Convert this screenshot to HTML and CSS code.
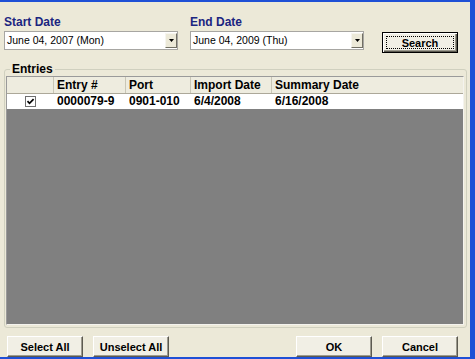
FILE: index.html
```html
<!DOCTYPE html>
<html>
<head>
<meta charset="utf-8">
<link rel="stylesheet" href="styles.css">
</head>
<body>
<div class="win">
  <div class="top">
    <div class="field">
      <div class="lbl">Start Date</div>
      <div class="combo">
        <span class="val">June 04, 2007 (Mon)</span>
        <span class="drop"><svg width="5" height="3" viewBox="0 0 5 3"><polygon points="0,0 5,0 2.5,3" fill="#000"/></svg></span>
      </div>
    </div>
    <div class="field">
      <div class="lbl">End Date</div>
      <div class="combo">
        <span class="val">June 04, 2009 (Thu)</span>
        <span class="drop"><svg width="5" height="3" viewBox="0 0 5 3"><polygon points="0,0 5,0 2.5,3" fill="#000"/></svg></span>
      </div>
    </div>
    <button class="btn default search"><span class="focus">Search</span></button>
  </div>
  <div class="group">
    <div class="legend">Entries</div>
    <div class="grid">
      <div class="row hdr">
        <div class="c c1"></div>
        <div class="c c2">Entry #</div>
        <div class="c c3">Port</div>
        <div class="c c4">Import Date</div>
        <div class="c c5">Summary Date</div>
      </div>
      <div class="row data">
        <div class="c c1"><span class="chk"><svg width="9" height="9" viewBox="0 0 9 9"><polyline points="1.5,4.2 3.5,6.3 7.6,2.2" fill="none" stroke="#000" stroke-width="1.7"/></svg></span></div>
        <div class="c c2">0000079-9</div>
        <div class="c c3">0901-010</div>
        <div class="c c4">6/4/2008</div>
        <div class="c c5">6/16/2008</div>
      </div>
    </div>
  </div>
  <div class="bottom">
    <button class="btn">Select All</button>
    <button class="btn">Unselect All</button>
    <button class="btn push">OK</button>
    <button class="btn">Cancel</button>
  </div>
</div>
</body>
</html>
```
FILE: styles.css
```css
html, body {
  margin: 0;
  padding: 0;
}
body {
  width: 475px;
  height: 359px;
  overflow: hidden;
  background: #1f50d6;
  font-family: "Liberation Sans", Arial, sans-serif;
  color: #000;
}
.win {
  margin-top: 2px;
  width: 470px;
  height: 355px;
  background: #ece9d8;
  display: flex;
  flex-direction: column;
}
.top {
  display: flex;
  align-items: flex-start;
  padding: 13px 0 0 4px;
}
.field {
  width: 174px;
  display: flex;
  flex-direction: column;
}
.field + .field {
  margin-left: 12px;
}
.lbl {
  font-weight: bold;
  font-size: 12px;
  line-height: 14px;
  height: 14px;
  margin-bottom: 2px;
  color: #1b2580;
}
.combo {
  box-sizing: border-box;
  height: 19px;
  border: 1px solid #a7a6a2;
  background: #fff;
  display: flex;
}
.val {
  flex: 1;
  font-size: 10.5px;
  line-height: 17px;
  padding-left: 2px;
  white-space: nowrap;
}
.drop {
  box-sizing: border-box;
  width: 12px;
  margin: 1px 0;
  background: #ece9d8;
  border: 1px solid;
  border-color: #f6f5ef #716f64 #716f64 #f6f5ef;
  display: flex;
  align-items: center;
  justify-content: center;
}
.btn {
  box-sizing: border-box;
  width: 76px;
  height: 21px;
  padding: 0;
  margin: 0;
  font-family: "Liberation Sans", Arial, sans-serif;
  font-weight: bold;
  font-size: 11px;
  color: #000;
  background: #f1efe5;
  border: 1px solid;
  border-color: #ffffff #5c5a50 #5c5a50 #ffffff;
  box-shadow: inset -1px -1px 0 #9c9a8e;
}
.btn.default {
  border: 1px solid #000;
  box-shadow: inset 1px 1px 0 #fff, inset -1px -1px 0 #5c5a50, inset -2px -2px 0 #9c9a8e;
  display: flex;
  padding: 3px;
}
.focus {
  flex: 1;
  border: 1px dotted #000;
  display: flex;
  align-items: center;
  justify-content: center;
}
.search {
  margin-left: 18px;
  margin-top: 17px;
}
.group {
  box-sizing: border-box;
  margin: 16px 3px 0 4px;
  height: 259px;
  border: 1px solid #d0d0bf;
  border-radius: 3px;
  display: flex;
  flex-direction: column;
}
.legend {
  align-self: flex-start;
  margin: -7px 0 0 5px;
  padding: 0 2px;
  background: #ece9d8;
  font-weight: bold;
  font-size: 12px;
  line-height: 13px;
  height: 13px;
}
.grid {
  box-sizing: border-box;
  margin: 0 2px 0 1px;
  height: 249px;
  background: #808080;
  border: 1px solid;
  border-color: #9a9a9a #f4f3ee #f4f3ee #9a9a9a;
}
.row {
  display: flex;
  font-weight: bold;
  font-size: 12px;
  white-space: nowrap;
}
.hdr {
  height: 16px;
  line-height: 16px;
  background: #eeecdf;
  border-bottom: 1px solid #aca899;
}
.data {
  height: 15px;
  line-height: 14px;
  background: #fff;
}
.c {
  box-sizing: border-box;
  padding-left: 3px;
  overflow: hidden;
}
.c2, .c3, .c4, .c5 {
  border-left: 1px solid transparent;
}
.hdr .c2, .hdr .c3, .hdr .c4, .hdr .c5 {
  border-left-color: #c9c6b6;
}
.c1 {
  width: 46px;
  padding-left: 0;
  display: flex;
  justify-content: center;
  align-items: flex-start;
}
.c2 { width: 72px; }
.c3 { width: 65px; }
.c4 { width: 81px; }
.c5 { flex: 1; }
.chk {
  box-sizing: border-box;
  width: 11px;
  height: 11px;
  margin-top: 2px;
  margin-left: 1px;
  border: 1px solid #6f6f6f;
  background: #fff;
  display: flex;
  align-items: center;
  justify-content: center;
}
.bottom {
  display: flex;
  gap: 10px;
  padding: 0 12px 0 7px;
  margin-top: 8px;
}
.push {
  margin-left: auto;
}
```
